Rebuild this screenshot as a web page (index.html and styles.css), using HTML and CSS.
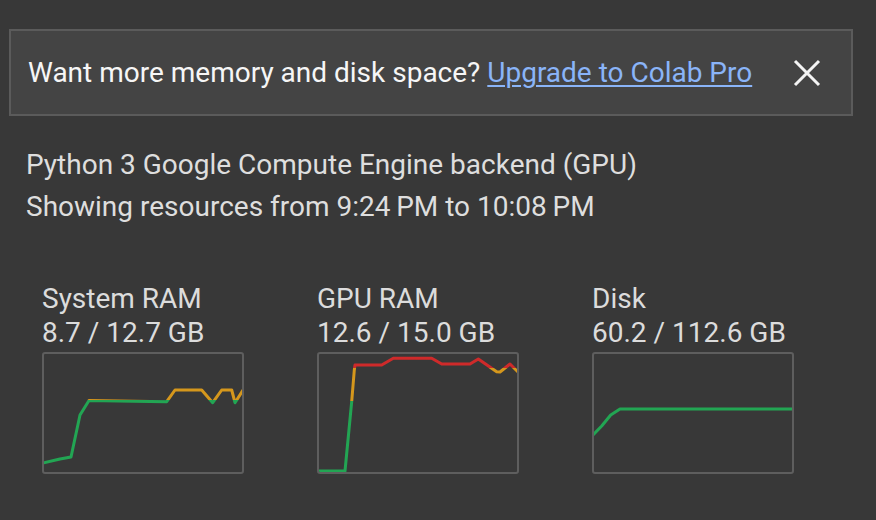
FILE: index.html
```html
<!DOCTYPE html>
<html>
<head>
<meta charset="utf-8">
<link rel="stylesheet" href="styles.css">
</head>
<body>
<div class="banner">
  <span class="banner-text">Want more memory and disk space? <a class="link" href="#">Upgrade to Colab Pro</a></span>
  <button class="close" aria-label="Close">
    <svg width="28" height="28" viewBox="0 0 28 28"><path d="M2 2 L26 26 M26 2 L2 26" stroke="#f4f4f4" stroke-width="3" fill="none"/></svg>
  </button>
</div>
<div class="info">
  <div>Python 3 Google Compute Engine backend (GPU)</div>
  <div>Showing resources from 9:24&#8201;PM to 10:08&#8201;PM</div>
</div>
<div class="charts">
  <div class="chart-col">
    <div class="label">System RAM</div>
    <div class="label">8.7 / 12.7 GB</div>
    <div class="chart">
      <svg width="198" height="118" viewBox="0 0 198 118">
        <defs>
          <linearGradient id="g1" gradientUnits="userSpaceOnUse" x1="0" y1="0" x2="0" y2="118">
            <stop offset="0" stop-color="#d5971c"/>
            <stop offset="0.392" stop-color="#d5971c"/>
            <stop offset="0.392" stop-color="#22a553"/>
            <stop offset="1" stop-color="#22a553"/>
          </linearGradient>
        </defs>
        <polyline points="-1,109 16,105 27,103 36,61 45,46.5 90,47.2 122.7,47.7 131,36 157.7,36 168.7,48.7 177.7,36 187.7,36 191,48.7 199,36" fill="none" stroke="url(#g1)" stroke-width="3" stroke-linejoin="round"/>
      </svg>
    </div>
  </div>
  <div class="chart-col">
    <div class="label">GPU RAM</div>
    <div class="label">12.6 / 15.0 GB</div>
    <div class="chart">
      <svg width="198" height="118" viewBox="0 0 198 118">
        <defs>
          <linearGradient id="g2" gradientUnits="userSpaceOnUse" x1="0" y1="0" x2="0" y2="118">
            <stop offset="0" stop-color="#cf2a2a"/>
            <stop offset="0.12" stop-color="#cf2a2a"/>
            <stop offset="0.12" stop-color="#d5971c"/>
            <stop offset="0.40" stop-color="#d5971c"/>
            <stop offset="0.40" stop-color="#22a553"/>
            <stop offset="1" stop-color="#22a553"/>
          </linearGradient>
        </defs>
        <polyline points="-1,117 26,117 32.7,47.7 35.3,16 36,11 62.7,11 74.3,4.3 112.7,4.3 122.7,10 151,10 159.3,5 177.7,17.7 181,18 191,10 199,18" fill="none" stroke="url(#g2)" stroke-width="3" stroke-linejoin="round"/>
      </svg>
    </div>
  </div>
  <div class="chart-col">
    <div class="label">Disk</div>
    <div class="label">60.2 / 112.6 GB</div>
    <div class="chart">
      <svg width="198" height="118" viewBox="0 0 198 118">
        <polyline points="-1,81 7.7,72 16.7,61 26,55 199,55" fill="none" stroke="#22a553" stroke-width="3" stroke-linejoin="round"/>
      </svg>
    </div>
  </div>
</div>
</body>
</html>
```
FILE: styles.css
```css
html, body {
  margin: 0;
  padding: 0;
  background: #383838;
  font-family: Roboto, "Noto Sans", sans-serif;
}

.banner {
  box-sizing: border-box;
  margin: 29px 0 0 9px;
  width: 844px;
  height: 87px;
  border: 2px solid #5b5b5b;
  background: #444444;
  display: flex;
  align-items: center;
  padding-left: 17px;
}

.banner-text {
  font-size: 28px;
  line-height: 83px;
  color: #f6f6f6;
  white-space: nowrap;
}

.link {
  color: #8ab4f8;
  text-decoration: underline;
  text-underline-offset: 3px;
  text-decoration-thickness: 2px;
}

.close {
  margin-left: auto;
  margin-right: 30px;
  padding: 0;
  border: 0;
  background: none;
  width: 28px;
  height: 28px;
  display: block;
}

.close svg {
  display: block;
}

.info {
  margin-top: 28px;
  padding-left: 26px;
  font-size: 28px;
  line-height: 42px;
  color: #dedede;
}

.charts {
  display: flex;
  padding-left: 42px;
  margin-top: 54px;
}

.chart-col {
  width: 275px;
}

.label {
  font-size: 28px;
  line-height: 34px;
  color: #dcdcdc;
}

.chart {
  box-sizing: border-box;
  margin-top: 2px;
  width: 202px;
  height: 122px;
  border: 2px solid #5e5e5e;
  border-radius: 3px;
  overflow: hidden;
}

.chart svg {
  display: block;
}
```
